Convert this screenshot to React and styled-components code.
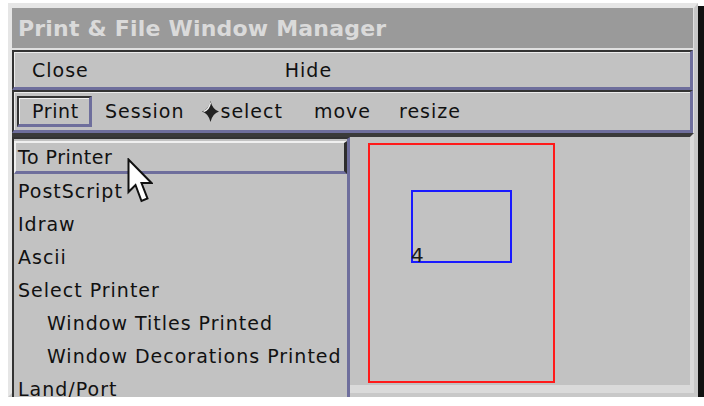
import React from "react";
import styled, { createGlobalStyle, css } from "styled-components";

const GlobalStyle = createGlobalStyle`
  html, body {
    margin: 0;
    padding: 0;
    background: #ffffff;
  }
  body {
    font-family: "DejaVu Sans", "Liberation Sans", sans-serif;
    color: #111111;
  }
`;

const Frame = styled.div`
  position: relative;
  box-sizing: border-box;
  width: 690px;
  height: 394px;
  margin: 3px 0 0 8px;
  display: flex;
  flex-direction: column;
  background: #e0e0e0;
  border-style: solid;
  border-width: 5px 4px 4px 4px;
  border-color: #e6e6e6 #c8c8c8 #c8c8c8 #e6e6e6;
  box-shadow: 6px 3px 0 #111111;
`;

const TitleBar = styled.div`
  height: 40px;
  margin: 0 1px 2px 0;
  padding-left: 6px;
  display: flex;
  align-items: center;
  background: #9a9a9a;
  color: #dadada;
  font-weight: bold;
  font-size: 22px;
  letter-spacing: 0.2px;
`;

const Bar = styled.div`
  box-sizing: border-box;
  height: ${(p) => p.$h}px;
  margin-right: 1px;
  padding-left: ${(p) => p.$pad}px;
  display: flex;
  align-items: center;
  background: #c2c2c2;
  border-style: solid;
  border-width: 2px 3px 3px 2px;
  border-color: #333333 #6e6e9c #6e6e9c #333333;
  box-shadow: inset 1px 1px 0 #ececec;
`;

const Item = styled.span`
  display: inline-flex;
  align-items: center;
  margin-left: ${(p) => p.$ml || 0}px;
  font-size: 19px;
  letter-spacing: 1px;
  white-space: nowrap;
`;

const PressedButton = styled.div`
  box-sizing: border-box;
  width: 75px;
  height: 31px;
  padding-left: 13px;
  display: flex;
  align-items: center;
  font-size: 19px;
  letter-spacing: 0.6px;
  border-style: solid;
  border-width: 2px 3px 3px 2px;
  border-color: #333333 #6e6e9c #6e6e9c #333333;
  box-shadow: inset 1px 1px 0 #f0f0f0;
`;

const Workspace = styled.div`
  position: relative;
  flex: 1;
  background: #c2c2c2;
  border-top: 4px solid #3a3a3a;
  border-right: 4px solid #dadada;
  border-bottom: 8px solid #dadada;
`;

const Outline = styled.div`
  position: absolute;
  box-sizing: border-box;
  left: ${(p) => p.$x}px;
  top: ${(p) => p.$y}px;
  width: ${(p) => p.$w}px;
  height: ${(p) => p.$h}px;
  border: 2px solid ${(p) => p.$color};
`;

const WindowNumber = styled.span`
  position: absolute;
  left: 399px;
  top: 108px;
  font-size: 20px;
  line-height: 20px;
  color: #1a1a1a;
`;

const Dropdown = styled.div`
  position: absolute;
  left: 0;
  top: 129px;
  box-sizing: border-box;
  width: 338px;
  height: 261px;
  padding-top: 2px;
  overflow: hidden;
  background: #c2c2c2;
  border-style: solid;
  border-width: 2px 3px 0 2px;
  border-color: #333333 #6e6e9c #333333 #333333;
`;

const MenuItem = styled.div`
  box-sizing: border-box;
  height: 33px;
  padding-left: ${(p) => (p.$indent ? 33 : 4)}px;
  display: flex;
  align-items: center;
  font-size: 19px;
  letter-spacing: 1px;
  white-space: nowrap;
  ${(p) =>
    p.$active &&
    css`
      padding-left: 2px;
      letter-spacing: 0.5px;
      border-style: solid;
      border-width: 2px 3px 3px 2px;
      border-color: #f0f0f0 #2e2e2e #6e6e9c #f0f0f0;
    `}
`;

const Cursor = styled.svg`
  position: absolute;
  left: 115px;
  top: 150px;
`;

const Diamond = () => (
  <svg width="17" height="21" viewBox="0 0 17 21" style={{ marginRight: 2 }}>
    <path d="M8.5 0 Q10.5 8.5 17 10.5 Q10.5 12.5 8.5 21 Q6.5 12.5 0 10.5 Q6.5 8.5 8.5 0Z" fill="#222" />
    <path d="M8.5 1.5 Q7 9 1.5 10.5" stroke="#f2f2f2" strokeWidth="1.3" fill="none" />
  </svg>
);

const menuItems = [
  { label: "To Printer", active: true },
  { label: "PostScript" },
  { label: "Idraw" },
  { label: "Ascii" },
  { label: "Select Printer" },
  { label: "Window Titles Printed", indent: true },
  { label: "Window Decorations Printed", indent: true },
  { label: "Land/Port" },
];

export default function App() {
  return (
    <>
      <GlobalStyle />
      <Frame>
        <TitleBar>Print &amp; File Window Manager</TitleBar>
        <Bar $h={40} $pad={18}>
          <Item>Close</Item>
          <Item $ml={196}>Hide</Item>
        </Bar>
        <Bar $h={43} $pad={3}>
          <PressedButton>Print</PressedButton>
          <Item $ml={13}>Session</Item>
          <Item $ml={17}>
            <Diamond />
            select
          </Item>
          <Item $ml={31}>move</Item>
          <Item $ml={28}>resize</Item>
        </Bar>
        <Workspace>
          <Outline $x={356} $y={6} $w={187} $h={240} $color="#ff1a1a" />
          <Outline $x={399} $y={53} $w={101} $h={73} $color="#1a1aff" />
          <WindowNumber>4</WindowNumber>
        </Workspace>
        <Dropdown>
          {menuItems.map((m) => (
            <MenuItem key={m.label} $active={m.active} $indent={m.indent}>
              {m.label}
            </MenuItem>
          ))}
        </Dropdown>
        <Cursor width="26" height="46" viewBox="0 0 26 46">
          <path
            d="M1.5 1.5 L1.5 34 L8.5 27 L14.5 43 L20.5 40.5 L14.5 25 L24.5 25 Z"
            fill="#ffffff"
            stroke="#111"
            strokeWidth="2"
            strokeLinejoin="miter"
          />
        </Cursor>
      </Frame>
    </>
  );
}
